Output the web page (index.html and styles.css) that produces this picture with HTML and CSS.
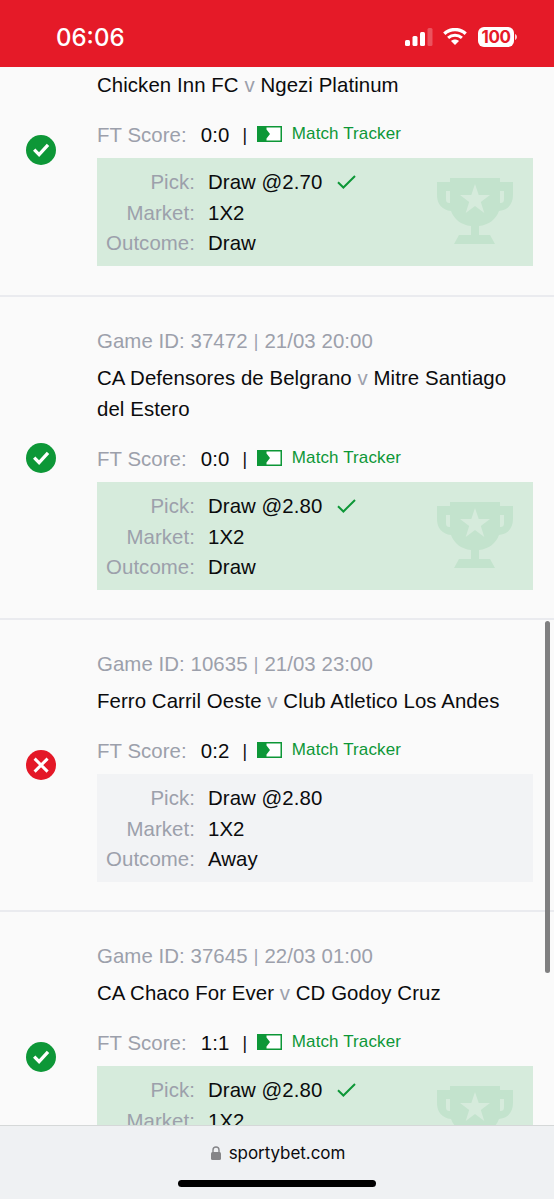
FILE: index.html
```html
<!DOCTYPE html>
<html lang="en">
<head>
<meta charset="utf-8">
<meta name="viewport" content="width=device-width">
<title>Bet details</title>
<link rel="stylesheet" href="styles.css">
</head>
<body>
<svg class="defs" aria-hidden="true">
  <symbol id="won" viewBox="0 0 30 30"><circle cx="15" cy="15" r="15" fill="#0d9737"/><path d="M8.200 14.600l4.900 5L22 9.800" fill="none" stroke="#fff" stroke-width="3.300"/></symbol>
  <symbol id="lost" viewBox="0 0 30 30"><circle cx="15" cy="15" r="15" fill="#e41827"/><path d="M8.600 8.600l13 13M21.600 8.600l-13 13" fill="none" stroke="#fff" stroke-width="3"/></symbol>
  <symbol id="tracker" viewBox="0 0 25 16"><path d="M.75.75h23.500v14.500H.75z" fill="#fff" stroke="#0d9737" stroke-width="1.500"/><path d="M0 0h9.500v3.500l3.500 4.500-3.500 4.500V16H0z" fill="#0d9737"/></symbol>
  <symbol id="tick" viewBox="0 0 19 14"><path d="M1 7.200l5.400 5.300L18 1" fill="none" stroke="#0d9737" stroke-width="2"/></symbol>
  <symbol id="trophy" viewBox="0 0 76 66"><path fill="#c3e3cd" fill-rule="evenodd" d="M13 0h50v4h13v13c0 9-5 15-14 16-3 8-10 14-20 15v9h11l5 9H17l5-9h12v-9c-10-1-17-7-20-15C5 32 0 26 0 17V4h13zM9 13v8c0 3 1 4 4 4V13zM63 13v12c3 0 4-1 4-4v-8zM38 6l-3.700 11H23l9.200 6.900L28.700 35 38 28l9.300 7-3.500-11.100L53 17H41.700z"/></symbol>
</svg>
<div class="screen">
  <header class="status">
    <time class="clock">06:06</time>
    <div class="indicators">
      <svg class="signal" viewBox="0 0 28 18" fill="#fff"><rect y="12" width="5" height="6" rx="1.500"/><rect x="7.500" y="8" width="5" height="10" rx="1.500"/><rect x="15" y="4" width="5" height="14" rx="1.500"/><rect x="22.500" width="5" height="18" rx="1.500" opacity=".25"/></svg>
      <svg class="wifi" viewBox="0 0 24 17"><path d="M1.300 5.700C7.300.1 16.700.1 22.700 5.700" fill="none" stroke="#fff" stroke-width="3.300"/><path d="M5.100 9.900c4-3.600 9.800-3.600 13.800 0" fill="none" stroke="#fff" stroke-width="3"/><path d="M8 12.900c2.300-2 5.700-2 8 0l-4 4z" fill="#fff"/></svg>
      <div class="battery">100</div>
      <svg class="cap" viewBox="0 0 2 6"><path d="M0 0c2.600 1 2.600 5 0 6z" fill="#fff" opacity=".8"/></svg>
    </div>
  </header>
  <main class="games">
    <article class="game first">
      <svg class="result"><use href="#won"/></svg>
      <div class="detail">
        <h2 class="teams">Chicken Inn FC <i>v</i> Ngezi Platinum</h2>
        <div class="score"><span class="label">FT Score:</span><span class="value">0:0</span><span class="bar">|</span><svg class="tracker"><use href="#tracker"/></svg><a class="link">Match Tracker</a></div>
        <div class="pick win">
          <dl><dt>Pick:</dt><dd>Draw @2.70<svg class="tick"><use href="#tick"/></svg></dd><dt>Market:</dt><dd>1X2</dd><dt>Outcome:</dt><dd>Draw</dd></dl>
          <svg class="trophy"><use href="#trophy"/></svg>
        </div>
      </div>
    </article>
    <article class="game">
      <svg class="result"><use href="#won"/></svg>
      <div class="detail">
        <p class="meta">Game ID: 37472 <b>|</b> 21/03 20:00</p>
        <h2 class="teams">CA Defensores de Belgrano <i>v</i> Mitre Santiago<br>del Estero</h2>
        <div class="score"><span class="label">FT Score:</span><span class="value">0:0</span><span class="bar">|</span><svg class="tracker"><use href="#tracker"/></svg><a class="link">Match Tracker</a></div>
        <div class="pick win">
          <dl><dt>Pick:</dt><dd>Draw @2.80<svg class="tick"><use href="#tick"/></svg></dd><dt>Market:</dt><dd>1X2</dd><dt>Outcome:</dt><dd>Draw</dd></dl>
          <svg class="trophy"><use href="#trophy"/></svg>
        </div>
      </div>
    </article>
    <article class="game">
      <svg class="result"><use href="#lost"/></svg>
      <div class="detail">
        <p class="meta">Game ID: 10635 <b>|</b> 21/03 23:00</p>
        <h2 class="teams">Ferro Carril Oeste <i>v</i> Club Atletico Los Andes</h2>
        <div class="score"><span class="label">FT Score:</span><span class="value">0:2</span><span class="bar">|</span><svg class="tracker"><use href="#tracker"/></svg><a class="link">Match Tracker</a></div>
        <div class="pick">
          <dl><dt>Pick:</dt><dd>Draw @2.80</dd><dt>Market:</dt><dd>1X2</dd><dt>Outcome:</dt><dd>Away</dd></dl>
        </div>
      </div>
    </article>
    <article class="game">
      <svg class="result"><use href="#won"/></svg>
      <div class="detail">
        <p class="meta">Game ID: 37645 <b>|</b> 22/03 01:00</p>
        <h2 class="teams">CA Chaco For Ever <i>v</i> CD Godoy Cruz</h2>
        <div class="score"><span class="label">FT Score:</span><span class="value">1:1</span><span class="bar">|</span><svg class="tracker"><use href="#tracker"/></svg><a class="link">Match Tracker</a></div>
        <div class="pick win">
          <dl><dt>Pick:</dt><dd>Draw @2.80<svg class="tick"><use href="#tick"/></svg></dd><dt>Market:</dt><dd>1X2</dd></dl>
          <svg class="trophy"><use href="#trophy"/></svg>
        </div>
      </div>
    </article>
  </main>
  <div class="scrollbar"></div>
  <footer class="browser">
    <div class="address"><svg class="lock" viewBox="0 0 10 14"><rect y="6" width="10" height="8" rx="1.500" fill="#858588"/><path d="M2 7V4a3 3 0 0 1 6 0v3" fill="none" stroke="#858588" stroke-width="1.400"/></svg><span>sportybet.com</span></div>
    <div class="home"></div>
  </footer>
</div>
</body>
</html>
```
FILE: styles.css
```css
* { box-sizing: border-box; margin: 0; padding: 0; }
body { background: #fafafa; font-family: "Liberation Sans", Arial, sans-serif; font-size: 20.4px; letter-spacing: .07px; color: #0b0b0d; }
.defs { position: absolute; width: 0; height: 0; }
.screen { position: relative; display: flex; flex-direction: column; width: 554px; height: 1199px; overflow: hidden; }
.status { flex: none; display: flex; justify-content: space-between; height: 67px; padding: 25px 37px 0 56px; background: #e51a28; color: #fff; }
.clock { font: 500 24px/26px Inter, sans-serif; letter-spacing: 0; }
.indicators { display: flex; align-items: flex-start; padding-top: 2px; }
.signal { width: 28px; height: 18px; margin: 1px 10px 0 -1px; }
.wifi { width: 24px; height: 17px; margin: 1px 11px 0 0; }
.battery { width: 36px; height: 20px; border-radius: 6px; background: #fff; color: #e51a28; font: 700 17px/20px Inter, sans-serif; letter-spacing: -.4px; text-align: center; }
.cap { width: 2px; height: 6px; margin: 7px 0 0 1px; }
.games { flex: 1; min-height: 0; overflow: hidden; }
.game { display: grid; grid-template-columns: 71px 436px; align-items: center; padding: 29px 0 28px 26px; border-bottom: 2px solid #eaebef; }
.game.first { padding-top: 2.500px; padding-bottom: 29px; }
.first .result { margin-top: -36px; }
.result { width: 30px; height: 30px; }
.meta, .label, dt, .teams i { color: #9ca0ab; }
.meta { height: 30px; line-height: 30px; margin-bottom: 7px; }
.meta b { display: inline-block; width: 5.300px; font-size: 17.500px; font-weight: 400; line-height: 1; text-align: center; vertical-align: 1px; }
.teams { font-size: inherit; font-weight: 400; line-height: 30.500px; letter-spacing: .08px; }
.teams i { font-style: normal; }
.score { display: flex; align-items: center; height: 30px; margin: 19.500px 0 8px; line-height: 30px; }
.value { margin-left: 14px; }
.bar { margin-left: 12.500px; font-size: 17.500px; width: 6px; text-align: center; }
.tracker { width: 25px; height: 16px; margin: -1px 9.500px 0; }
.link { margin-top: -1px; font-size: 17px; letter-spacing: .11px; color: #0d9737; }
.pick { display: flex; justify-content: space-between; height: 108px; padding: 9.500px 20px 0 8px; background: #f2f3f5; }
.pick.win { background: #d6ebdc; }
.first .pick { height: 108.500px; }
dl { display: grid; grid-template-columns: 90px auto; grid-auto-rows: 30.500px; column-gap: 13px; line-height: 30.500px; }
dt { text-align: right; }
dd { display: flex; align-items: center; }
.tick { width: 19px; height: 14px; margin-left: 15px; }
.trophy { width: 76px; height: 66px; margin-top: 11px; }
.scrollbar { position: absolute; left: 545px; top: 621px; width: 5px; height: 352px; border-radius: 3px; background: #7f7f80; }
.browser { flex: none; display: flex; flex-direction: column; align-items: center; justify-content: space-between; height: 74px; padding: 16px 0 12px; border-top: 1px solid #d5d8d8; background: #eff1f3; }
.address { display: flex; align-items: center; gap: 8px; padding-left: 2px; font: 17px/22px Inter, sans-serif; letter-spacing: -.05px; }
.lock { width: 10px; height: 14px; }
.home { width: 198px; height: 7px; border-radius: 4px; background: #000; }
```
